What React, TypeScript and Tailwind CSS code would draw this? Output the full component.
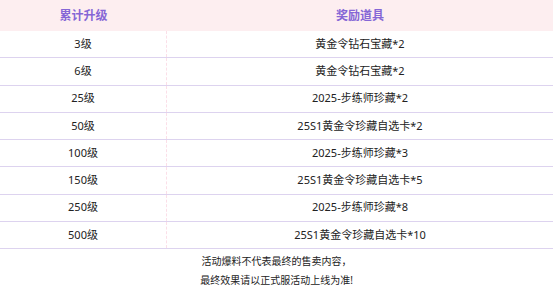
const rows = [
  ["3级", "黄金令钻石宝藏*2"],
  ["6级", "黄金令钻石宝藏*2"],
  ["25级", "2025-步练师珍藏*2"],
  ["50级", "25S1黄金令珍藏自选卡*2"],
  ["100级", "2025-步练师珍藏*3"],
  ["150级", "25S1黄金令珍藏自选卡*5"],
  ["250级", "2025-步练师珍藏*8"],
  ["500级", "25S1黄金令珍藏自选卡*10"],
];

export default function App() {
  return (
    <div className="w-[553px] h-[295px] bg-white overflow-hidden font-['Noto_Sans','Noto_Sans_CJK_SC',sans-serif] text-[11px] text-[#222]">
      {/* header */}
      <div className="grid grid-cols-[167px_1fr] h-[31px] bg-[#fdeef0] text-[12px] font-bold text-[#8566d6]">
        <div className="flex items-center justify-center">累计升级</div>
        <div className="flex items-center justify-center">奖励道具</div>
      </div>

      {/* rows */}
      {rows.map(([lv, reward]) => (
        <div
          key={lv}
          className="grid grid-cols-[167px_1fr] h-[27.25px] border-b border-[#ddd3ef]"
        >
          <div className="flex items-center justify-center border-r border-dashed border-[#fbdfe8]">
            {lv}
          </div>
          <div className="flex items-center justify-center">{reward}</div>
        </div>
      ))}

      {/* note */}
      <div className="pt-[3px] text-center text-[10px] leading-[19px] text-[#222]">
        <p>活动爆料不代表最终的售卖内容，</p>
        <p>最终效果请以正式服活动上线为准!</p>
      </div>
    </div>
  );
}
